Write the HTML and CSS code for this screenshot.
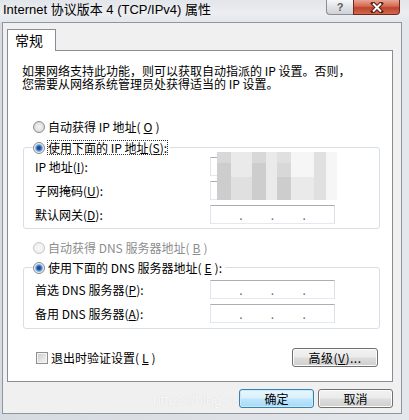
FILE: index.html
```html
<!DOCTYPE html>
<html lang="zh-CN">
<head>
  <meta charset="UTF-8" />
  <title>Internet 协议版本 4 (TCP/IPv4) 属性</title>
  <link rel="stylesheet" href="styles.css">
</head>
<body>
  <div class="window">
    <div class="titlebar">
      <span class="title">Internet 协议版本 4 (TCP/IPv4) 属性</span>
      <div class="caption">
        <span class="cap help">?</span>
        <span class="cap close">
          <svg width="14" height="11" viewBox="0 0 14 11">
            <path d="M3 1.5 L11 9.5 M11 1.5 L3 9.5" stroke="#5b1d12" stroke-width="4" stroke-linecap="square" />
            <path d="M3 1.5 L11 9.5 M11 1.5 L3 9.5" stroke="#fff" stroke-width="2" />
          </svg>
        </span>
      </div>
    </div>

    <div class="client">
      <div class="tabs"><span class="tab">常规</span></div>

      <div class="panel">
        <p class="intro">如果网络支持此功能，则可以获取自动指派的 IP 设置。否则，<br>您需要从网络系统管理员处获得适当的 IP 设置。</p>

        <div class="option option-ip"><span class="radio"></span>自动获得 IP 地址(<u>O</u>)</div>

        <fieldset class="group group-ip">
          <legend><span class="radio on"></span><span class="focus">使用下面的 IP 地址(<u>S</u>):</span></legend>
          <div class="masked">
            <div class="field"><span class="label">IP 地址(<u>I</u>):</span><span class="ipbox"></span></div>
            <div class="field"><span class="label">子网掩码(<u>U</u>):</span><span class="ipbox"></span></div>
            <div class="mosaic">
              <i class="m2"></i><i class="m4"></i><i class="m2"></i><i class="m4"></i><i class="m3"></i><i class="m5"></i><i class="m3"></i><i class="m5"></i>
              <i class="m1"></i><i class="m4"></i><i class="m1"></i><i class="m4"></i><i class="m2"></i><i class="m5"></i><i class="m3"></i><i class="m5"></i>
              <i class="m1"></i><i class="m3"></i><i class="m1"></i><i class="m4"></i><i class="m1"></i><i class="m4"></i><i class="m3"></i><i class="m5"></i>
            </div>
          </div>
          <div class="field"><span class="label">默认网关(<u>D</u>):</span><span class="ipbox"><b>.</b><b>.</b><b>.</b></span></div>
        </fieldset>

        <div class="option option-dns disabled"><span class="radio off"></span>自动获得 DNS 服务器地址(<u>B</u>)</div>

        <fieldset class="group group-dns">
          <legend><span class="radio on"></span>使用下面的 DNS 服务器地址(<u>E</u>):</legend>
          <div class="field"><span class="label">首选 DNS 服务器(<u>P</u>):</span><span class="ipbox"><b>.</b><b>.</b><b>.</b></span></div>
          <div class="field"><span class="label">备用 DNS 服务器(<u>A</u>):</span><span class="ipbox"><b>.</b><b>.</b><b>.</b></span></div>
        </fieldset>

        <div class="panel-foot">
          <div class="check"><span class="box"></span>退出时验证设置(<u>L</u>)</div>
          <button class="btn advanced">高级(<u>V</u>)...</button>
        </div>
      </div>

      <span class="watermark">https://blog.csdn.net/weixin_44539450</span>

      <div class="actions">
        <button class="btn default">确定</button>
        <button class="btn">取消</button>
      </div>
    </div>
  </div>
</body>
</html>
```

FILE: styles.css
```css
html, body {
  margin: 0;
  padding: 0;
}
body {
  width: 409px;
  height: 420px;
  overflow: hidden;
  background: linear-gradient(90deg, #d6dbe1 0, #e4e7eb 100%);
  font-family: "Noto Sans CJK SC", sans-serif;
  font-size: 12px;
  color: #000;
}
u {
  text-decoration: underline;
}

/* title bar */
.titlebar {
  height: 22px;
  display: flex;
  justify-content: space-between;
  align-items: flex-start;
  padding: 0 9px 0 3px;
  background: linear-gradient(180deg, #e2e5e9 0, #eceef1 60%, #e4e7eb 100%);
}
.title {
  font-family: "Liberation Sans", "Noto Sans CJK SC", sans-serif;
  font-size: 13px;
  line-height: 19px;
  color: #000;
}
.caption {
  display: flex;
}
.cap {
  height: 15px;
  box-sizing: border-box;
  display: flex;
  align-items: center;
  justify-content: center;
}
.help {
  width: 27px;
  border: 1px solid #8a8d92;
  border-top: 0;
  border-right: 0;
  border-radius: 0 0 0 4px;
  background: linear-gradient(180deg, #f6f7f8 0, #dfe2e6 50%, #cfd3d8 100%);
  font-family: "Liberation Sans", sans-serif;
  font-weight: bold;
  font-size: 11px;
  color: #5a5d62;
}
.close {
  width: 47px;
  border: 1px solid #6e2a1f;
  border-top: 0;
  border-radius: 0 0 4px 0;
  background: linear-gradient(180deg, #e8a493 0, #d26a53 45%, #c0432c 55%, #cf6a4e 100%);
}

/* client area */
.client {
  position: relative;
  width: 400px;
  height: 392px;
  margin-left: 2px;
  box-sizing: border-box;
  border: 1px solid #8d959e;
  background: #f0f0f0;
  padding: 6px 0 0 4px;
}
.tabs {
  display: flex;
}
.tab {
  position: relative;
  z-index: 1;
  height: 22px;
  box-sizing: border-box;
  margin-bottom: -1px;
  padding: 0 12px 0 7px;
  border: 1px solid #898c95;
  border-bottom: 0;
  background: #fff;
  font-size: 14px;
  line-height: 21px;
}
.panel {
  width: 386px;
  height: 332px;
  box-sizing: border-box;
  border: 1px solid #898c95;
  background: #fff;
}
.intro {
  margin: 14px 0 0 14px;
  line-height: 12.5px;
  white-space: nowrap;
}

/* radios and groups */
.option {
  display: flex;
  align-items: center;
  gap: 3px;
  height: 13px;
  line-height: 13px;
  margin-left: 25px;
}
.option-ip {
  margin-top: 30px;
}
.option-dns {
  margin-top: 12px;
}
.disabled {
  color: #8d8d8d;
}
.radio {
  width: 12px;
  height: 12px;
  box-sizing: border-box;
  border-radius: 50%;
  border: 1px solid #8a8c8f;
  background: radial-gradient(circle, #f4f4f4 0, #e2e2e2 55%, #c9c9c9 100%);
  flex: none;
}
.radio.on {
  background: radial-gradient(circle, #16336a 0, #2a62ad 2px, #5f9ad9 3px, #e9eef4 4.5px, #dcdcdc 100%);
}
.radio.off {
  border-color: #c4c6c8;
  background: radial-gradient(circle, #f7f7f7 0, #ececec 100%);
}
.group {
  border: 1px solid #d5dfe5;
  border-radius: 3px;
  margin: 8px 12px 0 15px;
  padding: 3px 0 4px 11px;
  min-width: 0;
}
.group-dns {
  margin-top: 7px;
  padding: 6px 0 5px 11px;
}
.group legend {
  display: flex;
  align-items: center;
  gap: 3px;
  height: 13px;
  line-height: 13px;
  margin-left: -2px;
  padding: 0 3px 0 0;
}
.focus {
  outline: 1px dotted #333;
  outline-offset: 0;
}
.field {
  display: flex;
  align-items: center;
  height: 19px;
}
.field + .field,
.masked + .field,
.masked .field + .field {
  margin-top: 5px;
}
.label {
  width: 175px;
  line-height: 13px;
}
.ipbox {
  width: 125px;
  height: 19px;
  box-sizing: border-box;
  border: 1px solid;
  border-color: #abadb3 #dbdfe6 #e3e9ef #e2e3ea;
  background: #fff;
  display: flex;
  justify-content: space-evenly;
  align-items: center;
}
.ipbox b {
  font-weight: normal;
  color: #6a6a6a;
  line-height: 13px;
}

/* blurred-out address */
.masked {
  position: relative;
}
.mosaic {
  position: absolute;
  top: -5px;
  left: 182px;
  display: grid;
  grid-template-columns: 14px 21px 14px 11px 14px 23px 12px 11px;
  grid-template-rows: 11px 14px 23px;
  filter: blur(0.6px);
}
.mosaic i { display: block; }
.m1 { background: #cdcdcd; }
.m2 { background: #d8d8d8; }
.m3 { background: #e0e0e0; }
.m4 { background: #eaeaea; }
.m5 { background: #f6f6f6; }

/* bottom of panel */
.panel-foot {
  display: flex;
  justify-content: space-between;
  align-items: center;
  margin: 19px 14px 0 28px;
}
.check {
  display: flex;
  align-items: center;
  gap: 3px;
  line-height: 13px;
}
.box {
  width: 12px;
  height: 12px;
  box-sizing: border-box;
  border: 1px solid #8e8f8f;
  background: linear-gradient(135deg, #c9c9c9 0, #e6e6e6 60%, #f4f4f4 100%);
  box-shadow: inset 0 0 0 1px #f4f4f4;
}
.btn {
  height: 19px;
  width: 75px;
  box-sizing: border-box;
  border: 1px solid #707070;
  border-radius: 3px;
  background: linear-gradient(180deg, #f2f2f2 0, #ebebeb 48%, #dddddd 52%, #cfcfcf 100%);
  box-shadow: inset 0 0 0 1px #fcfcfc;
  font-family: "Noto Sans CJK SC", sans-serif;
  font-size: 12px;
  line-height: 15px;
  color: #000;
  padding: 0;
}
.btn.advanced {
  width: 86px;
  letter-spacing: 0.5px;
}
.btn.default {
  border-color: #3c7fb1;
  background: linear-gradient(180deg, #eaf6fd 0, #d9f0fc 48%, #bee6fd 52%, #a7d9f5 100%);
  box-shadow: inset 0 0 0 1px #c4ecfd;
}
.actions {
  position: relative;
  display: flex;
  justify-content: flex-end;
  gap: 4px;
  margin-top: 7px;
  padding-right: 8px;
}
.watermark {
  position: absolute;
  left: 150px;
  bottom: 5px;
  font-family: "Liberation Sans", sans-serif;
  font-size: 14px;
  color: #f8f8f8;
  text-shadow: 0 0 1px #d4d4d4;
  white-space: nowrap;
  pointer-events: none;
}
```
